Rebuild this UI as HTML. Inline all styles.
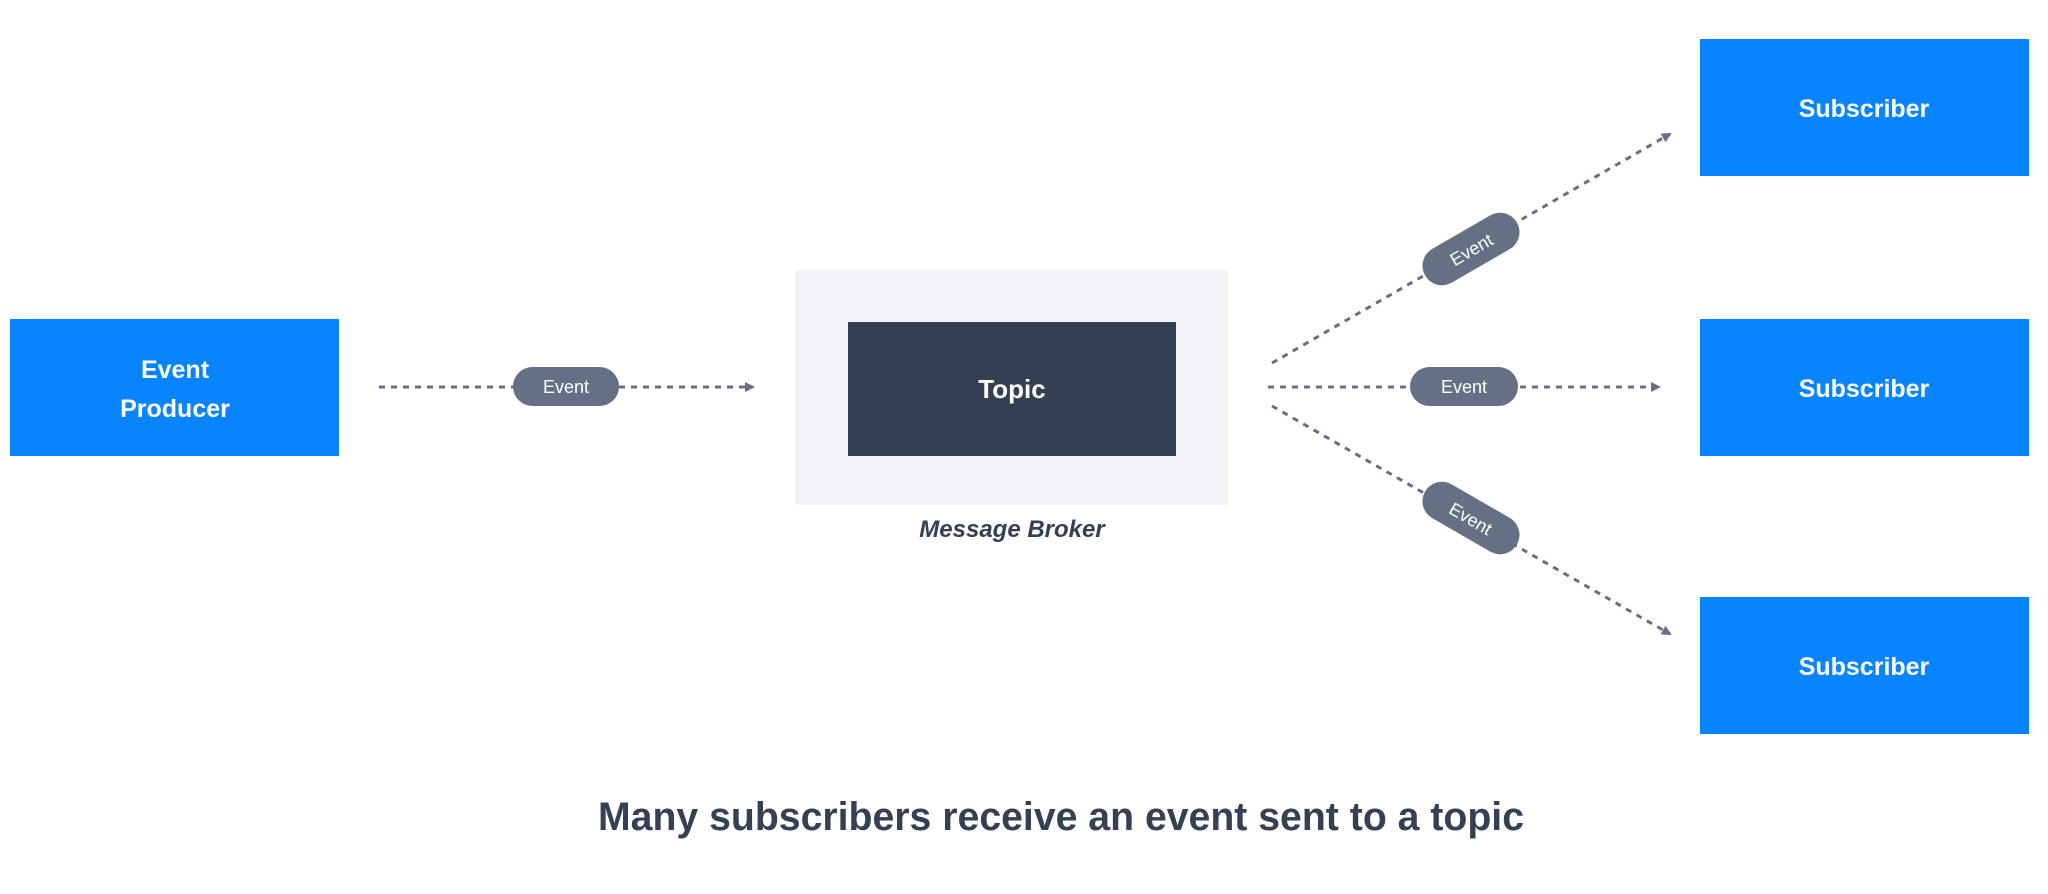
<!DOCTYPE html>
<html><head><meta charset="utf-8"><style>
html,body{margin:0;padding:0;background:#fff;}
svg{display:block;}
text{font-family:"Liberation Sans",sans-serif;}
</style></head><body>
<svg width="2048" height="894" viewBox="0 0 2048 894" xmlns="http://www.w3.org/2000/svg">
<defs>
<marker id="ah" markerWidth="10" markerHeight="10" refX="8" refY="5" orient="auto" markerUnits="userSpaceOnUse">
<path d="M0,0 L10,5 L0,10 Z" fill="#667085"/>
</marker>
</defs>
<rect x="10" y="319" width="329" height="137" fill="#0784fe"/>
<text x="175" y="378" text-anchor="middle" font-size="25" font-weight="bold" fill="#fff">Event</text>
<text x="175" y="417" text-anchor="middle" font-size="25" font-weight="bold" fill="#fff">Producer</text>

<g stroke="#667085" stroke-width="3" stroke-dasharray="6,6" fill="none">
<line x1="379" y1="387" x2="753" y2="387" marker-end="url(#ah)"/>
<line x1="1268" y1="387" x2="1659" y2="387" marker-end="url(#ah)"/>
<line x1="1272" y1="363" x2="1670" y2="134" marker-end="url(#ah)"/>
<line x1="1272" y1="406" x2="1670" y2="634" marker-end="url(#ah)"/>
</g>

<rect x="513" y="367" width="106" height="39" rx="19.5" fill="#667085"/>
<text x="566" y="393" text-anchor="middle" font-size="18" fill="#fff">Event</text>
<rect x="1410" y="367" width="108" height="39" rx="19.5" fill="#667085"/>
<text x="1464" y="393" text-anchor="middle" font-size="18" fill="#fff">Event</text>
<g transform="translate(1471,249) rotate(-30)">
<rect x="-53" y="-19.5" width="106" height="39" rx="19.5" fill="#667085"/>
<text x="0" y="7" text-anchor="middle" font-size="18" fill="#fff">Event</text>
</g>
<g transform="translate(1471,518) rotate(30)">
<rect x="-53" y="-19.5" width="106" height="39" rx="19.5" fill="#667085"/>
<text x="0" y="7" text-anchor="middle" font-size="18" fill="#fff">Event</text>
</g>

<rect x="795" y="270" width="433" height="235" rx="3" fill="#f2f3f6"/>
<rect x="848" y="322" width="328" height="134" fill="#353f53"/>
<text x="1012" y="398" text-anchor="middle" font-size="26" font-weight="bold" fill="#fff">Topic</text>
<text x="1012" y="537" text-anchor="middle" font-size="24" font-style="italic" font-weight="bold" fill="#344054">Message Broker</text>

<rect x="1700" y="39" width="329" height="137" fill="#0784fe"/>
<text x="1864" y="117" text-anchor="middle" font-size="25" font-weight="bold" fill="#fff">Subscriber</text>
<rect x="1700" y="319" width="329" height="137" fill="#0784fe"/>
<text x="1864" y="397" text-anchor="middle" font-size="25" font-weight="bold" fill="#fff">Subscriber</text>
<rect x="1700" y="597" width="329" height="137" fill="#0784fe"/>
<text x="1864" y="675" text-anchor="middle" font-size="25" font-weight="bold" fill="#fff">Subscriber</text>

<text x="598" y="830" font-size="40" font-weight="bold" fill="#344054" textLength="926" lengthAdjust="spacingAndGlyphs">Many subscribers receive an event sent to a topic</text>
</svg>
</body></html>
